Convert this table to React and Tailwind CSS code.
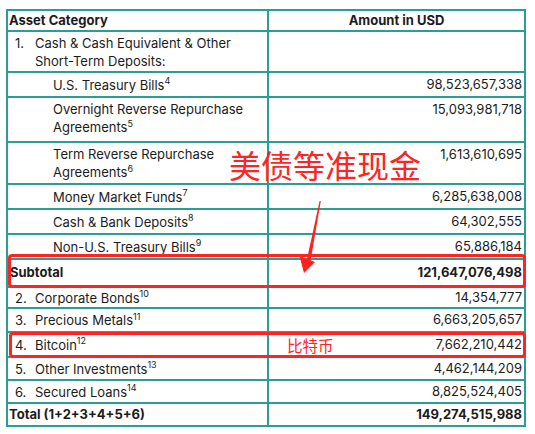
import React from "react";

const B = "border-[#2a9d94]";

function Row({ h, left, right, bold, first, center }) {
  return (
    <div className={`flex ${h} ${first ? "" : "border-t-2"} ${B} ${bold ? "font-bold" : ""}`}>
      <div className={`w-[261px] shrink-0 border-r-2 ${B} flex items-center`}>{left}</div>
      <div className={`flex-1 flex items-center ${center ? "justify-center" : "justify-end pr-[2px]"}`}>
        {right}
      </div>
    </div>
  );
}

function Num({ n, children }) {
  return (
    <div className="flex pl-[7px] leading-[18px]">
      <span className="w-[20px] shrink-0">{n}</span>
      <span>{children}</span>
    </div>
  );
}

function Sub({ children }) {
  return <div className="pl-[45px] leading-[18px]">{children}</div>;
}

function S({ children }) {
  return <sup className="text-[9px] -top-[0.6em]">{children}</sup>;
}

export default function App() {
  return (
    <div
      className="relative w-[535px] h-[434px] bg-white text-[#1c1c1c] text-[13px] pt-[9px] pl-[6px]"
      style={{ fontFamily: "Inter, 'Noto Sans', sans-serif" }}
    >
      <div className={`w-[520px] border-2 ${B}`}>
        <Row
          first
          h="h-[19px]"
          bold
          center
          left={<div className="pl-[1px]">Asset Category</div>}
          right={<span>Amount in USD</span>}
        />
        <Row
          h="h-[41px]"
          left={
            <Num n="1.">
              Cash &amp; Cash Equivalent &amp; Other
              <br />
              Short-Term Deposits:
            </Num>
          }
          right={null}
        />
        <Row
          h="h-[25px]"
          left={<Sub>U.S. Treasury Bills<S>4</S></Sub>}
          right={<span>98,523,657,338</span>}
        />
        <Row
          h="h-[45px]"
          left={
            <div className="self-start pt-[2px]">
              <Sub>
                Overnight Reverse Repurchase
                <br />
                Agreements<S>5</S>
              </Sub>
            </div>
          }
          right={<span className="self-start pt-[2px]">15,093,981,718</span>}
        />
        <Row
          h="h-[42px]"
          left={
            <Sub>
              Term Reverse Repurchase
              <br />
              Agreements<S>6</S>
            </Sub>
          }
          right={<span className="self-start pt-[2px]">1,613,610,695</span>}
        />
        <Row h="h-[25px]" left={<Sub>Money Market Funds<S>7</S></Sub>} right={<span>6,285,638,008</span>} />
        <Row h="h-[25px]" left={<Sub>Cash &amp; Bank Deposits<S>8</S></Sub>} right={<span>64,302,555</span>} />
        <Row h="h-[25px]" left={<Sub>Non-U.S. Treasury Bills<S>9</S></Sub>} right={<span>65,886,184</span>} />
        <Row
          h="h-[28px]"
          bold
          left={<div className="pl-[2px]">Subtotal</div>}
          right={<span>121,647,076,498</span>}
        />
        <Row h="h-[21px]" left={<Num n="2.">Corporate Bonds<S>10</S></Num>} right={<span>14,354,777</span>} />
        <Row h="h-[24px]" left={<Num n="3.">Precious Metals<S>11</S></Num>} right={<span>6,663,205,657</span>} />
        <Row h="h-[25px]" left={<Num n="4.">Bitcoin<S>12</S></Num>} right={<span>7,662,210,442</span>} />
        <Row h="h-[23px]" left={<Num n="5.">Other Investments<S>13</S></Num>} right={<span>4,462,144,209</span>} />
        <Row h="h-[23px]" left={<Num n="6.">Secured Loans<S>14</S></Num>} right={<span>8,825,524,405</span>} />
        <Row
          h="h-[23px]"
          bold
          left={<div className="pl-[1px]">Total (1+2+3+4+5+6)</div>}
          right={<span>149,274,515,988</span>}
        />
      </div>

      {/* annotations */}
      <div
        className="absolute left-[229px] top-[146px] text-[32px] leading-[36px] text-[#ff2424] whitespace-nowrap"
        style={{ fontFamily: "'Noto Sans CJK SC', sans-serif" }}
      >
        美债等准现金
      </div>
      <svg className="absolute left-0 top-0" width="535" height="434" viewBox="0 0 535 434">
        <polygon points="319.6,201 320.8,201 310.5,261 306.8,260" fill="#ff2020" />
        <polygon points="299.5,256 315,262 304,273" fill="#ff2020" />
      </svg>
      <div className="absolute left-[8px] top-[254px] w-[518px] h-[34px] border-[3px] border-[#ff2424] rounded-[4px]" />
      <div className="absolute left-[9px] top-[332px] w-[517px] h-[26px] border-[3px] border-[#ff2424] rounded-[4px]" />
      <div
        className="absolute left-[287px] top-[335px] text-[15.5px] leading-[20px] text-[#ff2424] whitespace-nowrap"
        style={{ fontFamily: "'Noto Sans CJK SC', sans-serif" }}
      >
        比特币
      </div>
    </div>
  );
}
